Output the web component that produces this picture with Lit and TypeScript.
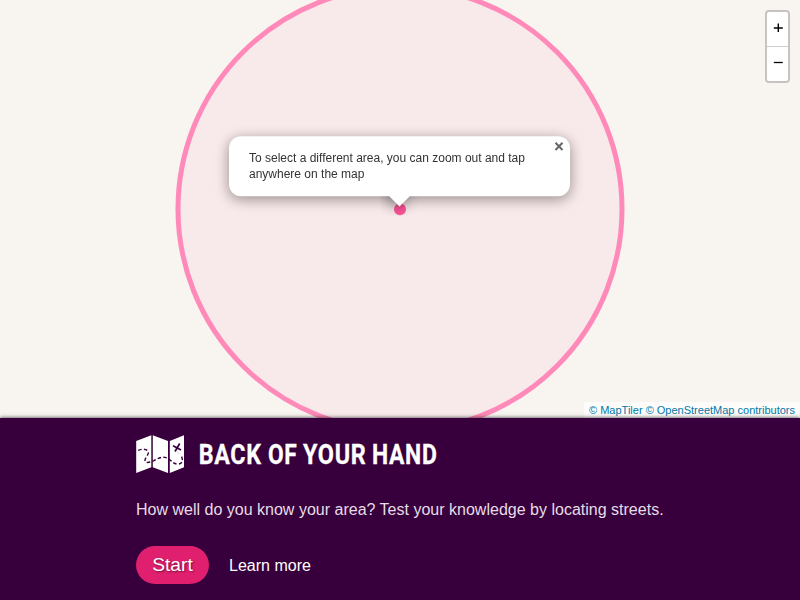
import { LitElement, html, css } from "lit";
import { customElement } from "lit/decorators.js";

@customElement("area-map")
class AreaMap extends LitElement {
  static styles = css`
    :host { display: block; position: relative; overflow: hidden; background: #f8f4f0; font-family: "Liberation Sans", Arial, sans-serif; }
    .shapes { display: block; width: 800px; height: 418px; }
    .popup { position: absolute; left: 229px; top: 136px; width: 341px; height: 60px; box-sizing: border-box; background: #fff; border-radius: 12px; box-shadow: 0 3px 14px rgba(0,0,0,.4); padding: 14px 20px 0; font-size: 12px; line-height: 16px; color: #333; transform: translateY(.2px); will-change: transform; }
    .tip-box { position: absolute; left: 380px; top: 196px; width: 40px; height: 20px; overflow: hidden; }
    .tip { width: 17px; height: 17px; margin: -10px auto 0; position: relative; left: -0.5px; transform: rotate(45deg); background: #fff; box-shadow: 0 3px 14px rgba(0,0,0,.4); }
    .close { position: absolute; right: 6px; top: 5px; width: 10px; height: 10px; }
    .zoom { position: absolute; top: 10px; right: 10px; width: 21px; border: 2px solid #c6c3c0; border-radius: 4px; background: #fff; }
    .zoom svg { display: block; width: 21px; height: 34px; }
    .zoom svg + svg { border-top: 1px solid #ccc; }
    .credits { position: absolute; right: 0; bottom: 0; height: 16px; padding: 0 5px; box-sizing: border-box; font-size: 11px; line-height: 16px; color: #0078a8; background: rgba(255,255,255,.7); white-space: nowrap; }
  `;
  render() {
    return html`
      <svg class="shapes" viewBox="0 0 800 418">
        <circle cx="400" cy="209" r="222" fill="#f8e9ea" stroke="#ff8ab9" stroke-width="5"/>
        <circle cx="400" cy="209.3" r="6" fill="#ff5599"/>
      </svg>
      <div class="popup">To select a different area, you can zoom out and tap anywhere on the map
        <svg class="close" viewBox="0 0 10 10"><path d="M1.500 1.500 8.500 8.800M8.500 1.500 1.500 8.800" stroke="#686868" stroke-width="2"/></svg>
      </div>
      <div class="tip-box"><div class="tip"></div></div>
      <div class="zoom">
        <svg viewBox="0 0 21 34"><path d="M6.800 16h9M11.300 11.500v8.500" stroke="#000" stroke-width="1.400"/></svg>
        <svg viewBox="0 0 21 34"><path d="M6.800 15.500h9" stroke="#000" stroke-width="1.300"/></svg>
      </div>
      <div class="credits">© MapTiler © OpenStreetMap contributors</div>
    `;
  }
}

@customElement("app-root")
class AppRoot extends LitElement {
  static styles = css`
    :host { display: flex; flex-direction: column; height: 600px; overflow: hidden; font-family: "Liberation Sans", Arial, sans-serif; }
    area-map { height: 418px; flex: none; }
    .panel { position: relative; flex: 1; box-sizing: border-box; padding: 17px 136px 0; background: #37003c; color: #fff; box-shadow: 0 0 4px rgba(0,0,0,.8); }
    .brand { display: flex; gap: 14px; height: 39px; }
    .logo { width: 49px; height: 39px; }
    .title { width: 260px; height: 39px; overflow: visible; font: 700 27.2px Roboto, sans-serif; letter-spacing: .8px; stroke: #fff; stroke-width: .3; }
    .intro { margin: 26px 0 0; font-size: 16px; line-height: 20px; color: #e6dde7; white-space: nowrap; letter-spacing: .007px; }
    .actions { display: flex; align-items: center; gap: 20px; margin-top: 26px; font-size: 16px; }
    .start { width: 73px; height: 38px; border-radius: 19px; border: 0; padding: 0; background: #e01f6f; color: #fff; font: 19.2px "Liberation Sans", Arial, sans-serif; text-shadow: 1px 1px 2px rgba(0,0,0,.5); }
    .more { padding-top: 2px; letter-spacing: .02px; }
  `;
  render() {
    return html`
      <area-map></area-map>
      <div class="panel">
        <div class="brand">
          <svg class="logo" viewBox="0 0 49 39">
            <path d="M.2 6 15.300.2V32.300L.2 38ZM16.800.2 32 6v32L16.800 32.300ZM33.800 6 48 .2V32.300L33.800 38Z" fill="#fff"/>
            <path d="M2.200 15.400C5 14.200 9 13.600 11.500 15.600C14.500 19 8.800 22 9 25.500C9.600 28.800 14 27.200 17.500 25.800C21.500 24 25.500 21 30 22.600C34.500 24 36.500 28.500 41 29.100C47.500 29.500 47.300 23.800 44.700 20" fill="none" stroke="#37003c" stroke-width="1.400" stroke-dasharray="3.600 2.200"/>
            <path d="m37 10.800 8 4.200M43.700 8.500l-4.700 8" fill="none" stroke="#37003c" stroke-width="1.700"/>
            <path d="m41.300 16.500 2 2.500" stroke="#c9bfcb" stroke-width=".8"/>
          </svg>
          <svg class="title" viewBox="0 0 260 39" fill="#fff">
            <text y="28.500" x="-.3" textLength="63" lengthAdjust="spacingAndGlyphs">BACK</text>
            <text y="28.500" x="69" textLength="29.500" lengthAdjust="spacingAndGlyphs">OF</text>
            <text y="28.500" x="104" textLength="63.500" lengthAdjust="spacingAndGlyphs">YOUR</text>
            <text y="28.500" x="173" textLength="65.500" lengthAdjust="spacingAndGlyphs">HAND</text>
          </svg>
        </div>
        <p class="intro">How well do you know your area? Test your knowledge by locating streets.</p>
        <div class="actions"><button class="start">Start</button><span class="more">Learn more</span></div>
      </div>
    `;
  }
}
